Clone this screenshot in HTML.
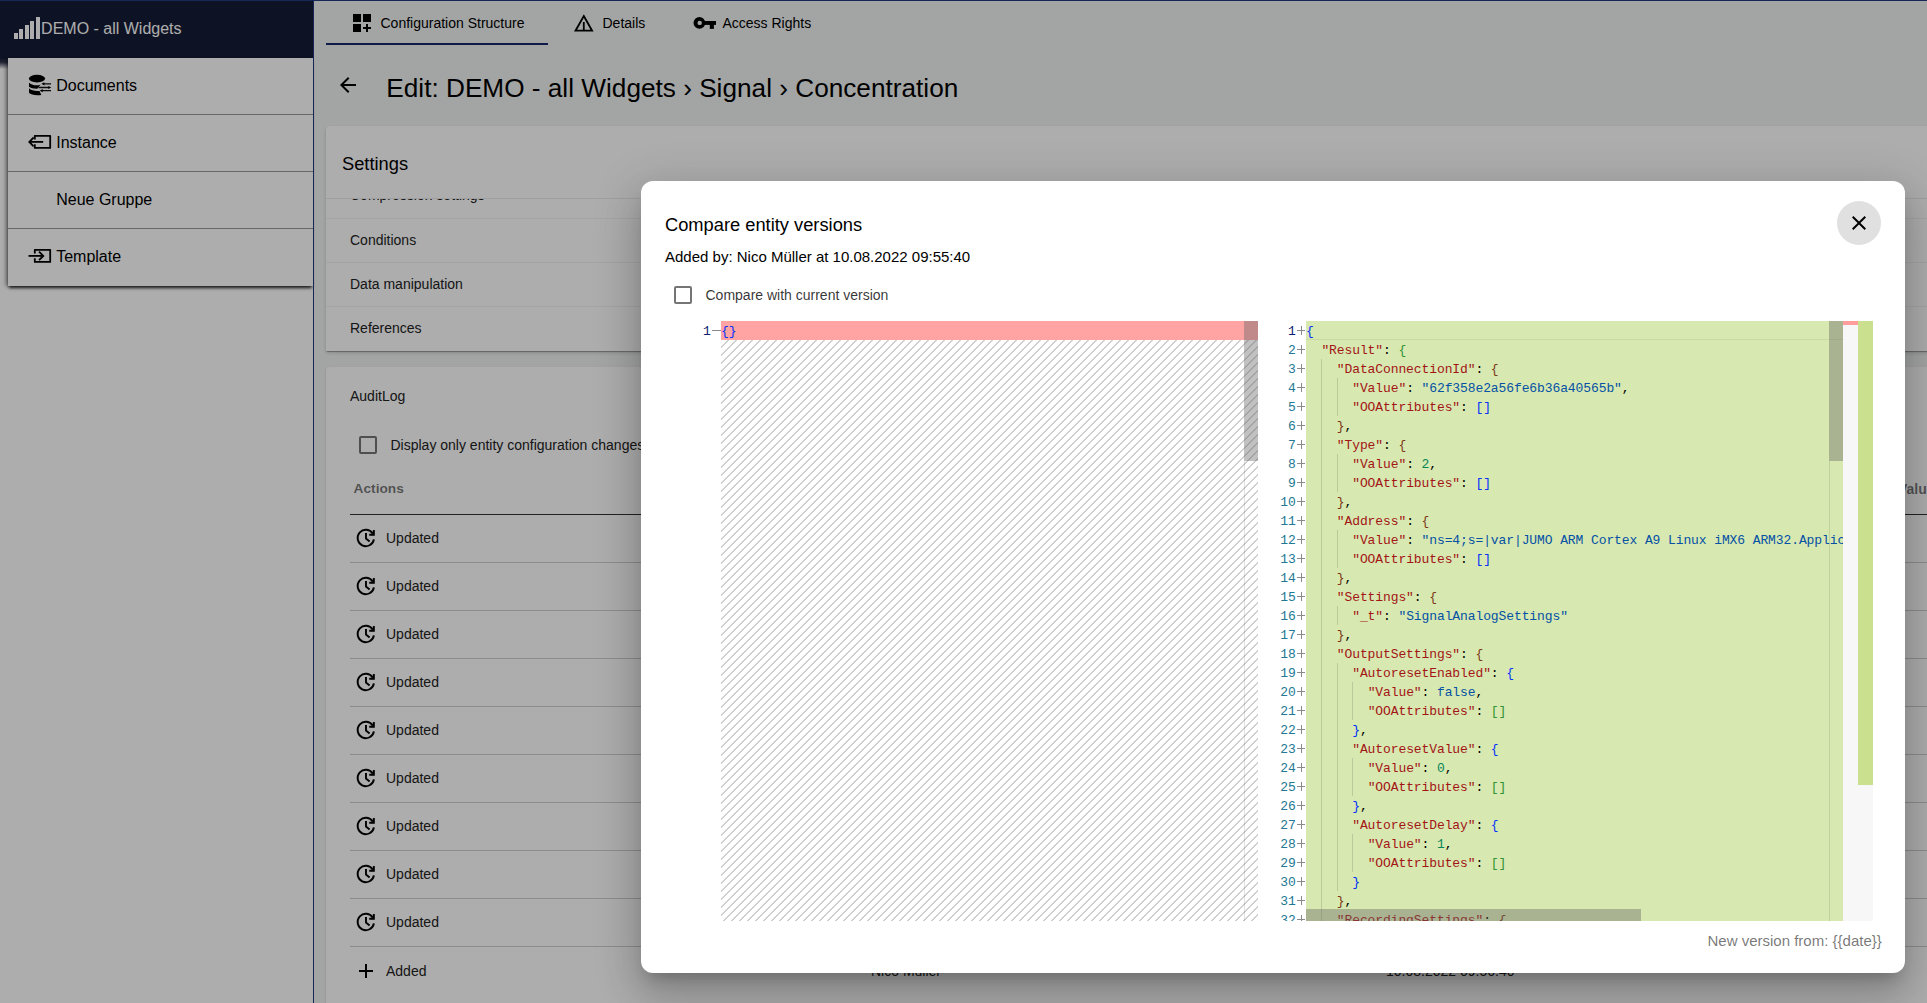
<!DOCTYPE html>
<html><head><meta charset="utf-8"><style>
*{box-sizing:border-box}
html,body{margin:0;padding:0}
body{width:1927px;height:1003px;overflow:hidden;position:relative;background:#f1f3f2;font-family:"Liberation Sans",sans-serif;color:#000}
.a{position:absolute}
.t{position:absolute;white-space:pre}
.mono{font-family:"Liberation Mono",monospace;font-size:13px;letter-spacing:-0.1px;white-space:pre}
</style></head><body>
<div class="a" style="left:0;top:58px;width:313px;height:945px;background:#fff"></div>
<div class="a" style="left:0;top:0;width:313px;height:58px;background:#141b35"></div>
<div class="a" style="left:0;top:58px;width:313px;height:11px;background:linear-gradient(#141b35 0%,rgba(20,27,53,.85) 40%,rgba(20,27,53,0) 100%)"></div>
<div class="a" style="left:0;top:0;width:1927px;height:1px;background:#203880"></div>
<div class="a" style="left:13.9px;top:33px;width:4px;height:6px;background:#fff"></div>
<div class="a" style="left:19.2px;top:29px;width:4px;height:10px;background:#fff"></div>
<div class="a" style="left:24.9px;top:25px;width:4px;height:14px;background:#fff"></div>
<div class="a" style="left:30.1px;top:21px;width:4px;height:18px;background:#fff"></div>
<div class="a" style="left:35.8px;top:16.5px;width:4px;height:22.5px;background:#fff"></div>
<div class="t" style="left:41.1px;top:21.26px;font-size:16px;line-height:16px;color:#fff">DEMO - all Widgets</div>

<div class="a" style="left:8px;top:58px;width:305px;height:227.5px;background:#fff;box-shadow:0 3px 3px -1px rgba(0,0,0,.8),-3px 1px 4px -1px rgba(0,0,0,.45)"></div>
<div class="a" style="left:8px;top:114px;width:305px;height:1px;background:#9a9a9a"></div>
<div class="t" style="left:56.2px;top:77.86px;font-size:16px;line-height:16px;color:#000">Documents</div>

<div class="a" style="left:8px;top:171px;width:305px;height:1px;background:#9a9a9a"></div>
<div class="t" style="left:56.2px;top:134.86px;font-size:16px;line-height:16px;color:#000">Instance</div>

<div class="a" style="left:8px;top:228px;width:305px;height:1px;background:#9a9a9a"></div>
<div class="t" style="left:56.2px;top:191.86px;font-size:16px;line-height:16px;color:#000">Neue Gruppe</div>

<div class="t" style="left:56.2px;top:248.86px;font-size:16px;line-height:16px;color:#000">Template</div>

<svg class="a" style="left:24px;top:70px" width="32" height="30" viewBox="24 70 32 30">
<ellipse cx="37" cy="78.6" rx="8.1" ry="3.8" fill="#000"/>
<path d="M29 82.4 C31 85, 37 86.3, 40.6 84.4 L37.3 88.8 C33.5 88.9, 30.5 88, 29 86.8 Z" fill="#000"/>
<path d="M29 88.3 C31 90.5, 36 91.6, 39.5 90.9 L41.3 94.9 C36 95.6, 30.5 94.8, 29 92.8 Z" fill="#000"/>
<path d="M43.5 83.8 H51 M38.5 87.5 H49 M42 90.7 H51" stroke="#111" stroke-width="1.3" fill="none"/>
<path d="M41.4 83.8 L44.4 82.2 V85.4Z M51.3 87.5 L48.3 85.9 V89.1Z M39.7 90.7 L42.7 89.1 V92.3Z" fill="#000"/>
</svg>
<svg class="a" style="left:24px;top:128px" width="32" height="30" viewBox="24 128 32 30">
<path d="M34.8 139.5 V135.8 H50.2 V147.9 H34.8 V144.2" stroke="#000" stroke-width="1.8" fill="none" stroke-linejoin="round"/>
<path d="M30 141.9 H43.2" stroke="#000" stroke-width="1.8"/>
<path d="M33.6 137.5 L29.3 141.9 L33.6 146.3" stroke="#000" stroke-width="1.8" fill="none"/>
</svg>
<svg class="a" style="left:24px;top:242px" width="32" height="30" viewBox="24 242 32 30">
<path d="M34.8 253.5 V249.8 H50.2 V261.9 H34.8 V258.2" stroke="#000" stroke-width="1.8" fill="none" stroke-linejoin="round"/>
<path d="M28.5 255.9 H42" stroke="#000" stroke-width="1.8"/>
<path d="M39 251.6 L43.3 255.9 L39 260.2" stroke="#000" stroke-width="1.8" fill="none"/>
</svg>
<div class="a" style="left:313px;top:0;width:1px;height:1003px;background:#203880"></div>
<div class="a" style="left:326px;top:43px;width:222px;height:2px;background:#16276b"></div>
<svg class="a" style="left:353px;top:14px" width="18" height="18" viewBox="0 0 18 18">
<rect x="0" y="0" width="8" height="8" fill="#000"/><rect x="10" y="0" width="8" height="8" fill="#000"/>
<rect x="0" y="10" width="8" height="8" fill="#000"/><path d="M14 10 V18 M10 14 H18" stroke="#000" stroke-width="2"/></svg>
<div class="t" style="left:380.5px;top:15.65px;font-size:14px;line-height:14px">Configuration Structure</div>

<svg class="a" style="left:573px;top:13px" width="22" height="20" viewBox="0 0 22 20">
<path d="M10.8 3 L19.1 17.7 H2.5 Z" stroke="#000" stroke-width="1.8" fill="none"/><path d="M10.8 9 V17.7" stroke="#000" stroke-width="1.8"/></svg>
<div class="t" style="left:602.5px;top:15.65px;font-size:14px;line-height:14px">Details</div>

<svg class="a" style="left:688px;top:10px" width="32" height="26" viewBox="688 10 32 26">
<path fill-rule="evenodd" d="M693.5 22.9 a5.9 5.9 0 1 0 11.8 0 a5.9 5.9 0 1 0 -11.8 0 Z M697.5 22.9 a2.2 2.2 0 1 0 4.4 0 a2.2 2.2 0 1 0 -4.4 0Z" fill="#000"/>
<rect x="704" y="21" width="12" height="3.9" fill="#000"/><rect x="709.8" y="24" width="4.1" height="4.9" fill="#000"/></svg>
<div class="t" style="left:722.5px;top:15.65px;font-size:14px;line-height:14px">Access Rights</div>

<svg class="a" style="left:336px;top:73px" width="24" height="24" viewBox="0 0 24 24"><path d="M20 11H7.83l5.59-5.59L12 4l-8 8 8 8 1.41-1.41L7.83 13H20v-2z" fill="#000"/></svg>
<div class="t" style="left:386.3px;top:74.62px;font-size:26.2px;line-height:26.2px">Edit: DEMO - all Widgets › Signal › Concentration</div>

<div class="a" style="left:326px;top:126px;width:1620px;height:225px;background:#fff;border-radius:4px 4px 0 0;box-shadow:0 2px 1px -1px rgba(0,0,0,.2),0 1px 1px 0 rgba(0,0,0,.14),0 2px 4px 0 rgba(0,0,0,.14)"></div>
<div class="t" style="left:342px;top:154.81px;font-size:18.3px;line-height:18.3px">Settings</div>

<div class="a" style="left:326px;top:198px;width:1601px;height:152px;overflow:hidden"><div class="t" style="left:24px;top:-9.65px;font-size:14px;line-height:14px;color:#222">Compression settings</div>
</div>
<div class="a" style="left:326px;top:198px;width:1601px;height:1px;background:#ebebeb"></div>
<div class="a" style="left:326px;top:218px;width:1601px;height:1px;background:#f2f2f2"></div>
<div class="a" style="left:326px;top:262px;width:1601px;height:1px;background:#f2f2f2"></div>
<div class="a" style="left:326px;top:306px;width:1601px;height:1px;background:#f2f2f2"></div>
<div class="t" style="left:350px;top:233.05px;font-size:14px;line-height:14px;color:#222">Conditions</div>

<div class="t" style="left:350px;top:276.85px;font-size:14px;line-height:14px;color:#222">Data manipulation</div>

<div class="t" style="left:350px;top:320.85px;font-size:14px;line-height:14px;color:#222">References</div>

<div class="a" style="left:326px;top:367px;width:1620px;height:700px;background:#fff;border-radius:4px;box-shadow:0 2px 1px -1px rgba(0,0,0,.2),0 1px 1px 0 rgba(0,0,0,.14),0 1px 3px 0 rgba(0,0,0,.12)"></div>
<div class="t" style="left:350px;top:389.15px;font-size:14px;line-height:14px;color:#222">AuditLog</div>

<div class="a" style="left:359px;top:436px;width:18px;height:18px;border:2px solid rgba(0,0,0,.54);border-radius:2px"></div>
<div class="t" style="left:390.5px;top:438.15px;font-size:14px;line-height:14px;color:#222">Display only entity configuration changes</div>

<div class="t" style="left:353.6px;top:482.30px;font-size:13.7px;line-height:13.7px;color:rgba(0,0,0,.54);font-weight:bold">Actions</div>

<div class="t" style="left:1898px;top:482.05px;font-size:14px;line-height:14px;color:rgba(0,0,0,.54);font-weight:bold">Value</div>

<div class="a" style="left:350px;top:514px;width:1577px;height:1px;background:#333"></div>
<svg class="a" style="left:350px;top:522px" width="32" height="32" viewBox="350 522 32 32">
<path d="M372.9 533.8 A8.2 8.2 0 1 0 373.9 539.3" stroke="#000" stroke-width="1.9" fill="none"/>
<path d="M369.2 534.8 H373.85 V530.1" stroke="#000" stroke-width="1.9" fill="none"/>
<path d="M366 533 V538.6 L369.6 541.4" stroke="#000" stroke-width="1.9" fill="none"/></svg>
<div class="t" style="left:386px;top:530.95px;font-size:14px;line-height:14px;color:#222">Updated</div>

<div class="a" style="left:350px;top:562px;width:1577px;height:1px;background:#cfcfcf"></div>
<svg class="a" style="left:350px;top:570px" width="32" height="32" viewBox="350 522 32 32">
<path d="M372.9 533.8 A8.2 8.2 0 1 0 373.9 539.3" stroke="#000" stroke-width="1.9" fill="none"/>
<path d="M369.2 534.8 H373.85 V530.1" stroke="#000" stroke-width="1.9" fill="none"/>
<path d="M366 533 V538.6 L369.6 541.4" stroke="#000" stroke-width="1.9" fill="none"/></svg>
<div class="t" style="left:386px;top:578.95px;font-size:14px;line-height:14px;color:#222">Updated</div>

<div class="a" style="left:350px;top:610px;width:1577px;height:1px;background:#cfcfcf"></div>
<svg class="a" style="left:350px;top:618px" width="32" height="32" viewBox="350 522 32 32">
<path d="M372.9 533.8 A8.2 8.2 0 1 0 373.9 539.3" stroke="#000" stroke-width="1.9" fill="none"/>
<path d="M369.2 534.8 H373.85 V530.1" stroke="#000" stroke-width="1.9" fill="none"/>
<path d="M366 533 V538.6 L369.6 541.4" stroke="#000" stroke-width="1.9" fill="none"/></svg>
<div class="t" style="left:386px;top:626.95px;font-size:14px;line-height:14px;color:#222">Updated</div>

<div class="a" style="left:350px;top:658px;width:1577px;height:1px;background:#cfcfcf"></div>
<svg class="a" style="left:350px;top:666px" width="32" height="32" viewBox="350 522 32 32">
<path d="M372.9 533.8 A8.2 8.2 0 1 0 373.9 539.3" stroke="#000" stroke-width="1.9" fill="none"/>
<path d="M369.2 534.8 H373.85 V530.1" stroke="#000" stroke-width="1.9" fill="none"/>
<path d="M366 533 V538.6 L369.6 541.4" stroke="#000" stroke-width="1.9" fill="none"/></svg>
<div class="t" style="left:386px;top:674.95px;font-size:14px;line-height:14px;color:#222">Updated</div>

<div class="a" style="left:350px;top:706px;width:1577px;height:1px;background:#cfcfcf"></div>
<svg class="a" style="left:350px;top:714px" width="32" height="32" viewBox="350 522 32 32">
<path d="M372.9 533.8 A8.2 8.2 0 1 0 373.9 539.3" stroke="#000" stroke-width="1.9" fill="none"/>
<path d="M369.2 534.8 H373.85 V530.1" stroke="#000" stroke-width="1.9" fill="none"/>
<path d="M366 533 V538.6 L369.6 541.4" stroke="#000" stroke-width="1.9" fill="none"/></svg>
<div class="t" style="left:386px;top:722.95px;font-size:14px;line-height:14px;color:#222">Updated</div>

<div class="a" style="left:350px;top:754px;width:1577px;height:1px;background:#cfcfcf"></div>
<svg class="a" style="left:350px;top:762px" width="32" height="32" viewBox="350 522 32 32">
<path d="M372.9 533.8 A8.2 8.2 0 1 0 373.9 539.3" stroke="#000" stroke-width="1.9" fill="none"/>
<path d="M369.2 534.8 H373.85 V530.1" stroke="#000" stroke-width="1.9" fill="none"/>
<path d="M366 533 V538.6 L369.6 541.4" stroke="#000" stroke-width="1.9" fill="none"/></svg>
<div class="t" style="left:386px;top:770.95px;font-size:14px;line-height:14px;color:#222">Updated</div>

<div class="a" style="left:350px;top:802px;width:1577px;height:1px;background:#cfcfcf"></div>
<svg class="a" style="left:350px;top:810px" width="32" height="32" viewBox="350 522 32 32">
<path d="M372.9 533.8 A8.2 8.2 0 1 0 373.9 539.3" stroke="#000" stroke-width="1.9" fill="none"/>
<path d="M369.2 534.8 H373.85 V530.1" stroke="#000" stroke-width="1.9" fill="none"/>
<path d="M366 533 V538.6 L369.6 541.4" stroke="#000" stroke-width="1.9" fill="none"/></svg>
<div class="t" style="left:386px;top:818.95px;font-size:14px;line-height:14px;color:#222">Updated</div>

<div class="a" style="left:350px;top:850px;width:1577px;height:1px;background:#cfcfcf"></div>
<svg class="a" style="left:350px;top:858px" width="32" height="32" viewBox="350 522 32 32">
<path d="M372.9 533.8 A8.2 8.2 0 1 0 373.9 539.3" stroke="#000" stroke-width="1.9" fill="none"/>
<path d="M369.2 534.8 H373.85 V530.1" stroke="#000" stroke-width="1.9" fill="none"/>
<path d="M366 533 V538.6 L369.6 541.4" stroke="#000" stroke-width="1.9" fill="none"/></svg>
<div class="t" style="left:386px;top:866.95px;font-size:14px;line-height:14px;color:#222">Updated</div>

<div class="a" style="left:350px;top:898px;width:1577px;height:1px;background:#cfcfcf"></div>
<svg class="a" style="left:350px;top:906px" width="32" height="32" viewBox="350 522 32 32">
<path d="M372.9 533.8 A8.2 8.2 0 1 0 373.9 539.3" stroke="#000" stroke-width="1.9" fill="none"/>
<path d="M369.2 534.8 H373.85 V530.1" stroke="#000" stroke-width="1.9" fill="none"/>
<path d="M366 533 V538.6 L369.6 541.4" stroke="#000" stroke-width="1.9" fill="none"/></svg>
<div class="t" style="left:386px;top:914.95px;font-size:14px;line-height:14px;color:#222">Updated</div>

<div class="a" style="left:350px;top:946px;width:1577px;height:1px;background:#cfcfcf"></div>
<svg class="a" style="left:357px;top:963px" width="18" height="18" viewBox="0 0 18 18"><path d="M9 1V15M2 8H16" stroke="#000" stroke-width="2"/></svg>
<div class="t" style="left:386px;top:963.95px;font-size:14px;line-height:14px;color:#222">Added</div>

<div class="t" style="left:871px;top:963.95px;font-size:14px;line-height:14px;color:#222">Nico Müller</div>

<div class="t" style="left:1386px;top:963.95px;font-size:14px;line-height:14px;color:#222">10.08.2022 09:56:40</div>

<div class="a" style="left:0;top:0;width:1927px;height:1003px;background:rgba(0,0,0,.32)"></div>
<div class="a" style="left:641px;top:181px;width:1264px;height:792px;background:#fff;border-radius:12px;box-shadow:0 11px 15px -7px rgba(0,0,0,.2),0 24px 38px 3px rgba(0,0,0,.14),0 9px 46px 8px rgba(0,0,0,.12)"></div>
<div class="t" style="left:665px;top:215.51px;font-size:18.3px;line-height:18.3px;color:#000">Compare entity versions</div>

<div class="t" style="left:665px;top:248.80px;font-size:15px;line-height:15px;color:#000">Added by: Nico Müller at 10.08.2022 09:55:40</div>

<div class="a" style="left:674px;top:286px;width:18px;height:18px;border:2px solid rgba(0,0,0,.54);border-radius:2px"></div>
<div class="t" style="left:705.5px;top:287.85px;font-size:14px;line-height:14px;color:rgba(0,0,0,.8)">Compare with current version</div>

<div class="a" style="left:1837px;top:201px;width:44px;height:44px;border-radius:50%;background:#e0e0e0"></div>
<svg class="a" style="left:1847px;top:211px" width="24" height="24" viewBox="0 0 24 24"><path d="M19 6.41L17.59 5 12 10.59 6.41 5 5 6.41 10.59 12 5 17.59 6.41 19 12 13.41 17.59 19 19 17.59 13.41 12z" fill="#000"/></svg>
<div class="t" style="left:1707.5px;top:932.90px;font-size:15px;line-height:15px;color:rgba(0,0,0,.55)">New version from: {{date}}</div>

<div class="a" style="left:665px;top:321px;width:1208px;height:600px;overflow:hidden;background:#fff">
<div class="a" style="left:579px;top:140px;width:1px;height:460px;background:#e2e2e2"></div>
<div class="a" style="left:56px;top:19px;width:537px;height:600px;background-image:linear-gradient(-45deg,rgba(34,34,34,.22) 12.5%,transparent 12.5%,transparent 50%,rgba(34,34,34,.22) 50%,rgba(34,34,34,.22) 62.5%,transparent 62.5%,transparent 100%);background-size:8px 8px"></div>
<div class="a" style="left:56px;top:0px;width:537px;height:19px;background:#ffa3a3"></div>
<div class="a mono" style="left:38px;top:0.7px;width:8px;height:19px;line-height:19px;color:#0b216f">1</div>
<div class="a" style="left:47px;top:9px;width:9px;height:1px;background:#888"></div>
<div class="a mono" style="left:56px;top:0.7px;height:19px;line-height:19px;color:#0431fa">{}</div>
<div class="a" style="left:579px;top:0px;width:14px;height:140px;background:rgba(100,100,100,.4)"></div>
<div class="a" style="left:641px;top:0px;width:537px;height:600px;background:#d7e8b1"></div>
<div class="a" style="left:641px;top:18px;width:537px;height:1px;background:rgba(0,0,0,.06)"></div>
<div class="a" style="left:656px;top:38px;width:1px;height:19px;background:rgba(0,0,0,.13)"></div>
<div class="a" style="left:656px;top:57px;width:1px;height:19px;background:rgba(0,0,0,.13)"></div>
<div class="a" style="left:672px;top:57px;width:1px;height:19px;background:rgba(0,0,0,.13)"></div>
<div class="a" style="left:656px;top:76px;width:1px;height:19px;background:rgba(0,0,0,.13)"></div>
<div class="a" style="left:672px;top:76px;width:1px;height:19px;background:rgba(0,0,0,.13)"></div>
<div class="a" style="left:656px;top:95px;width:1px;height:19px;background:rgba(0,0,0,.13)"></div>
<div class="a" style="left:656px;top:114px;width:1px;height:19px;background:rgba(0,0,0,.13)"></div>
<div class="a" style="left:656px;top:133px;width:1px;height:19px;background:rgba(0,0,0,.13)"></div>
<div class="a" style="left:672px;top:133px;width:1px;height:19px;background:rgba(0,0,0,.13)"></div>
<div class="a" style="left:656px;top:152px;width:1px;height:19px;background:rgba(0,0,0,.13)"></div>
<div class="a" style="left:672px;top:152px;width:1px;height:19px;background:rgba(0,0,0,.13)"></div>
<div class="a" style="left:656px;top:171px;width:1px;height:19px;background:rgba(0,0,0,.13)"></div>
<div class="a" style="left:656px;top:190px;width:1px;height:19px;background:rgba(0,0,0,.13)"></div>
<div class="a" style="left:656px;top:209px;width:1px;height:19px;background:rgba(0,0,0,.13)"></div>
<div class="a" style="left:672px;top:209px;width:1px;height:19px;background:rgba(0,0,0,.13)"></div>
<div class="a" style="left:656px;top:228px;width:1px;height:19px;background:rgba(0,0,0,.13)"></div>
<div class="a" style="left:672px;top:228px;width:1px;height:19px;background:rgba(0,0,0,.13)"></div>
<div class="a" style="left:656px;top:247px;width:1px;height:19px;background:rgba(0,0,0,.13)"></div>
<div class="a" style="left:656px;top:266px;width:1px;height:19px;background:rgba(0,0,0,.13)"></div>
<div class="a" style="left:656px;top:285px;width:1px;height:19px;background:rgba(0,0,0,.13)"></div>
<div class="a" style="left:672px;top:285px;width:1px;height:19px;background:rgba(0,0,0,.13)"></div>
<div class="a" style="left:656px;top:304px;width:1px;height:19px;background:rgba(0,0,0,.13)"></div>
<div class="a" style="left:656px;top:323px;width:1px;height:19px;background:rgba(0,0,0,.13)"></div>
<div class="a" style="left:656px;top:342px;width:1px;height:19px;background:rgba(0,0,0,.13)"></div>
<div class="a" style="left:672px;top:342px;width:1px;height:19px;background:rgba(0,0,0,.13)"></div>
<div class="a" style="left:656px;top:361px;width:1px;height:19px;background:rgba(0,0,0,.13)"></div>
<div class="a" style="left:672px;top:361px;width:1px;height:19px;background:rgba(0,0,0,.13)"></div>
<div class="a" style="left:687px;top:361px;width:1px;height:19px;background:rgba(0,0,0,.13)"></div>
<div class="a" style="left:656px;top:380px;width:1px;height:19px;background:rgba(0,0,0,.13)"></div>
<div class="a" style="left:672px;top:380px;width:1px;height:19px;background:rgba(0,0,0,.13)"></div>
<div class="a" style="left:687px;top:380px;width:1px;height:19px;background:rgba(0,0,0,.13)"></div>
<div class="a" style="left:656px;top:399px;width:1px;height:19px;background:rgba(0,0,0,.13)"></div>
<div class="a" style="left:672px;top:399px;width:1px;height:19px;background:rgba(0,0,0,.13)"></div>
<div class="a" style="left:656px;top:418px;width:1px;height:19px;background:rgba(0,0,0,.13)"></div>
<div class="a" style="left:672px;top:418px;width:1px;height:19px;background:rgba(0,0,0,.13)"></div>
<div class="a" style="left:656px;top:437px;width:1px;height:19px;background:rgba(0,0,0,.13)"></div>
<div class="a" style="left:672px;top:437px;width:1px;height:19px;background:rgba(0,0,0,.13)"></div>
<div class="a" style="left:687px;top:437px;width:1px;height:19px;background:rgba(0,0,0,.13)"></div>
<div class="a" style="left:656px;top:456px;width:1px;height:19px;background:rgba(0,0,0,.13)"></div>
<div class="a" style="left:672px;top:456px;width:1px;height:19px;background:rgba(0,0,0,.13)"></div>
<div class="a" style="left:687px;top:456px;width:1px;height:19px;background:rgba(0,0,0,.13)"></div>
<div class="a" style="left:656px;top:475px;width:1px;height:19px;background:rgba(0,0,0,.13)"></div>
<div class="a" style="left:672px;top:475px;width:1px;height:19px;background:rgba(0,0,0,.13)"></div>
<div class="a" style="left:656px;top:494px;width:1px;height:19px;background:rgba(0,0,0,.13)"></div>
<div class="a" style="left:672px;top:494px;width:1px;height:19px;background:rgba(0,0,0,.13)"></div>
<div class="a" style="left:656px;top:513px;width:1px;height:19px;background:rgba(0,0,0,.13)"></div>
<div class="a" style="left:672px;top:513px;width:1px;height:19px;background:rgba(0,0,0,.13)"></div>
<div class="a" style="left:687px;top:513px;width:1px;height:19px;background:rgba(0,0,0,.13)"></div>
<div class="a" style="left:656px;top:532px;width:1px;height:19px;background:rgba(0,0,0,.13)"></div>
<div class="a" style="left:672px;top:532px;width:1px;height:19px;background:rgba(0,0,0,.13)"></div>
<div class="a" style="left:687px;top:532px;width:1px;height:19px;background:rgba(0,0,0,.13)"></div>
<div class="a" style="left:656px;top:551px;width:1px;height:19px;background:rgba(0,0,0,.13)"></div>
<div class="a" style="left:672px;top:551px;width:1px;height:19px;background:rgba(0,0,0,.13)"></div>
<div class="a" style="left:656px;top:570px;width:1px;height:19px;background:rgba(0,0,0,.13)"></div>
<div class="a" style="left:656px;top:589px;width:1px;height:19px;background:rgba(0,0,0,.13)"></div>
<div class="a mono" style="left:593px;top:0.7px;width:37.700000000000045px;height:19px;line-height:19px;text-align:right;color:#0b216f">1</div>
<div class="a" style="left:632px;top:9px;width:8px;height:1px;background:#8a8a8a"></div>
<div class="a" style="left:635.5px;top:5px;width:1px;height:9px;background:#8a8a8a"></div>
<div class="a mono" style="left:593px;top:19.7px;width:37.700000000000045px;height:19px;line-height:19px;text-align:right;color:#237893">2</div>
<div class="a" style="left:632px;top:28px;width:8px;height:1px;background:#8a8a8a"></div>
<div class="a" style="left:635.5px;top:24px;width:1px;height:9px;background:#8a8a8a"></div>
<div class="a mono" style="left:593px;top:38.7px;width:37.700000000000045px;height:19px;line-height:19px;text-align:right;color:#237893">3</div>
<div class="a" style="left:632px;top:47px;width:8px;height:1px;background:#8a8a8a"></div>
<div class="a" style="left:635.5px;top:43px;width:1px;height:9px;background:#8a8a8a"></div>
<div class="a mono" style="left:593px;top:57.7px;width:37.700000000000045px;height:19px;line-height:19px;text-align:right;color:#237893">4</div>
<div class="a" style="left:632px;top:66px;width:8px;height:1px;background:#8a8a8a"></div>
<div class="a" style="left:635.5px;top:62px;width:1px;height:9px;background:#8a8a8a"></div>
<div class="a mono" style="left:593px;top:76.7px;width:37.700000000000045px;height:19px;line-height:19px;text-align:right;color:#237893">5</div>
<div class="a" style="left:632px;top:85px;width:8px;height:1px;background:#8a8a8a"></div>
<div class="a" style="left:635.5px;top:81px;width:1px;height:9px;background:#8a8a8a"></div>
<div class="a mono" style="left:593px;top:95.7px;width:37.700000000000045px;height:19px;line-height:19px;text-align:right;color:#237893">6</div>
<div class="a" style="left:632px;top:104px;width:8px;height:1px;background:#8a8a8a"></div>
<div class="a" style="left:635.5px;top:100px;width:1px;height:9px;background:#8a8a8a"></div>
<div class="a mono" style="left:593px;top:114.7px;width:37.700000000000045px;height:19px;line-height:19px;text-align:right;color:#237893">7</div>
<div class="a" style="left:632px;top:123px;width:8px;height:1px;background:#8a8a8a"></div>
<div class="a" style="left:635.5px;top:119px;width:1px;height:9px;background:#8a8a8a"></div>
<div class="a mono" style="left:593px;top:133.7px;width:37.700000000000045px;height:19px;line-height:19px;text-align:right;color:#237893">8</div>
<div class="a" style="left:632px;top:142px;width:8px;height:1px;background:#8a8a8a"></div>
<div class="a" style="left:635.5px;top:138px;width:1px;height:9px;background:#8a8a8a"></div>
<div class="a mono" style="left:593px;top:152.7px;width:37.700000000000045px;height:19px;line-height:19px;text-align:right;color:#237893">9</div>
<div class="a" style="left:632px;top:161px;width:8px;height:1px;background:#8a8a8a"></div>
<div class="a" style="left:635.5px;top:157px;width:1px;height:9px;background:#8a8a8a"></div>
<div class="a mono" style="left:593px;top:171.7px;width:37.700000000000045px;height:19px;line-height:19px;text-align:right;color:#237893">10</div>
<div class="a" style="left:632px;top:180px;width:8px;height:1px;background:#8a8a8a"></div>
<div class="a" style="left:635.5px;top:176px;width:1px;height:9px;background:#8a8a8a"></div>
<div class="a mono" style="left:593px;top:190.7px;width:37.700000000000045px;height:19px;line-height:19px;text-align:right;color:#237893">11</div>
<div class="a" style="left:632px;top:199px;width:8px;height:1px;background:#8a8a8a"></div>
<div class="a" style="left:635.5px;top:195px;width:1px;height:9px;background:#8a8a8a"></div>
<div class="a mono" style="left:593px;top:209.7px;width:37.700000000000045px;height:19px;line-height:19px;text-align:right;color:#237893">12</div>
<div class="a" style="left:632px;top:218px;width:8px;height:1px;background:#8a8a8a"></div>
<div class="a" style="left:635.5px;top:214px;width:1px;height:9px;background:#8a8a8a"></div>
<div class="a mono" style="left:593px;top:228.7px;width:37.700000000000045px;height:19px;line-height:19px;text-align:right;color:#237893">13</div>
<div class="a" style="left:632px;top:237px;width:8px;height:1px;background:#8a8a8a"></div>
<div class="a" style="left:635.5px;top:233px;width:1px;height:9px;background:#8a8a8a"></div>
<div class="a mono" style="left:593px;top:247.7px;width:37.700000000000045px;height:19px;line-height:19px;text-align:right;color:#237893">14</div>
<div class="a" style="left:632px;top:256px;width:8px;height:1px;background:#8a8a8a"></div>
<div class="a" style="left:635.5px;top:252px;width:1px;height:9px;background:#8a8a8a"></div>
<div class="a mono" style="left:593px;top:266.7px;width:37.700000000000045px;height:19px;line-height:19px;text-align:right;color:#237893">15</div>
<div class="a" style="left:632px;top:275px;width:8px;height:1px;background:#8a8a8a"></div>
<div class="a" style="left:635.5px;top:271px;width:1px;height:9px;background:#8a8a8a"></div>
<div class="a mono" style="left:593px;top:285.7px;width:37.700000000000045px;height:19px;line-height:19px;text-align:right;color:#237893">16</div>
<div class="a" style="left:632px;top:294px;width:8px;height:1px;background:#8a8a8a"></div>
<div class="a" style="left:635.5px;top:290px;width:1px;height:9px;background:#8a8a8a"></div>
<div class="a mono" style="left:593px;top:304.7px;width:37.700000000000045px;height:19px;line-height:19px;text-align:right;color:#237893">17</div>
<div class="a" style="left:632px;top:313px;width:8px;height:1px;background:#8a8a8a"></div>
<div class="a" style="left:635.5px;top:309px;width:1px;height:9px;background:#8a8a8a"></div>
<div class="a mono" style="left:593px;top:323.7px;width:37.700000000000045px;height:19px;line-height:19px;text-align:right;color:#237893">18</div>
<div class="a" style="left:632px;top:332px;width:8px;height:1px;background:#8a8a8a"></div>
<div class="a" style="left:635.5px;top:328px;width:1px;height:9px;background:#8a8a8a"></div>
<div class="a mono" style="left:593px;top:342.7px;width:37.700000000000045px;height:19px;line-height:19px;text-align:right;color:#237893">19</div>
<div class="a" style="left:632px;top:351px;width:8px;height:1px;background:#8a8a8a"></div>
<div class="a" style="left:635.5px;top:347px;width:1px;height:9px;background:#8a8a8a"></div>
<div class="a mono" style="left:593px;top:361.7px;width:37.700000000000045px;height:19px;line-height:19px;text-align:right;color:#237893">20</div>
<div class="a" style="left:632px;top:370px;width:8px;height:1px;background:#8a8a8a"></div>
<div class="a" style="left:635.5px;top:366px;width:1px;height:9px;background:#8a8a8a"></div>
<div class="a mono" style="left:593px;top:380.7px;width:37.700000000000045px;height:19px;line-height:19px;text-align:right;color:#237893">21</div>
<div class="a" style="left:632px;top:389px;width:8px;height:1px;background:#8a8a8a"></div>
<div class="a" style="left:635.5px;top:385px;width:1px;height:9px;background:#8a8a8a"></div>
<div class="a mono" style="left:593px;top:399.7px;width:37.700000000000045px;height:19px;line-height:19px;text-align:right;color:#237893">22</div>
<div class="a" style="left:632px;top:408px;width:8px;height:1px;background:#8a8a8a"></div>
<div class="a" style="left:635.5px;top:404px;width:1px;height:9px;background:#8a8a8a"></div>
<div class="a mono" style="left:593px;top:418.7px;width:37.700000000000045px;height:19px;line-height:19px;text-align:right;color:#237893">23</div>
<div class="a" style="left:632px;top:427px;width:8px;height:1px;background:#8a8a8a"></div>
<div class="a" style="left:635.5px;top:423px;width:1px;height:9px;background:#8a8a8a"></div>
<div class="a mono" style="left:593px;top:437.7px;width:37.700000000000045px;height:19px;line-height:19px;text-align:right;color:#237893">24</div>
<div class="a" style="left:632px;top:446px;width:8px;height:1px;background:#8a8a8a"></div>
<div class="a" style="left:635.5px;top:442px;width:1px;height:9px;background:#8a8a8a"></div>
<div class="a mono" style="left:593px;top:456.7px;width:37.700000000000045px;height:19px;line-height:19px;text-align:right;color:#237893">25</div>
<div class="a" style="left:632px;top:465px;width:8px;height:1px;background:#8a8a8a"></div>
<div class="a" style="left:635.5px;top:461px;width:1px;height:9px;background:#8a8a8a"></div>
<div class="a mono" style="left:593px;top:475.7px;width:37.700000000000045px;height:19px;line-height:19px;text-align:right;color:#237893">26</div>
<div class="a" style="left:632px;top:484px;width:8px;height:1px;background:#8a8a8a"></div>
<div class="a" style="left:635.5px;top:480px;width:1px;height:9px;background:#8a8a8a"></div>
<div class="a mono" style="left:593px;top:494.7px;width:37.700000000000045px;height:19px;line-height:19px;text-align:right;color:#237893">27</div>
<div class="a" style="left:632px;top:503px;width:8px;height:1px;background:#8a8a8a"></div>
<div class="a" style="left:635.5px;top:499px;width:1px;height:9px;background:#8a8a8a"></div>
<div class="a mono" style="left:593px;top:513.7px;width:37.700000000000045px;height:19px;line-height:19px;text-align:right;color:#237893">28</div>
<div class="a" style="left:632px;top:522px;width:8px;height:1px;background:#8a8a8a"></div>
<div class="a" style="left:635.5px;top:518px;width:1px;height:9px;background:#8a8a8a"></div>
<div class="a mono" style="left:593px;top:532.7px;width:37.700000000000045px;height:19px;line-height:19px;text-align:right;color:#237893">29</div>
<div class="a" style="left:632px;top:541px;width:8px;height:1px;background:#8a8a8a"></div>
<div class="a" style="left:635.5px;top:537px;width:1px;height:9px;background:#8a8a8a"></div>
<div class="a mono" style="left:593px;top:551.7px;width:37.700000000000045px;height:19px;line-height:19px;text-align:right;color:#237893">30</div>
<div class="a" style="left:632px;top:560px;width:8px;height:1px;background:#8a8a8a"></div>
<div class="a" style="left:635.5px;top:556px;width:1px;height:9px;background:#8a8a8a"></div>
<div class="a mono" style="left:593px;top:570.7px;width:37.700000000000045px;height:19px;line-height:19px;text-align:right;color:#237893">31</div>
<div class="a" style="left:632px;top:579px;width:8px;height:1px;background:#8a8a8a"></div>
<div class="a" style="left:635.5px;top:575px;width:1px;height:9px;background:#8a8a8a"></div>
<div class="a mono" style="left:593px;top:589.7px;width:37.700000000000045px;height:19px;line-height:19px;text-align:right;color:#237893">32</div>
<div class="a" style="left:632px;top:598px;width:8px;height:1px;background:#8a8a8a"></div>
<div class="a" style="left:635.5px;top:594px;width:1px;height:9px;background:#8a8a8a"></div>
<div class="a" style="left:641px;top:0;width:537px;height:600px;overflow:hidden">
<div class="a mono" style="left:0;top:0.7px;height:19px;line-height:19px"><span style="color:#0431fa">{</span></div>
<div class="a mono" style="left:0;top:19.7px;height:19px;line-height:19px"><span style="color:#000">  </span><span style="color:#a31515">&quot;Result&quot;</span><span style="color:#000">: </span><span style="color:#319331">{</span></div>
<div class="a mono" style="left:0;top:38.7px;height:19px;line-height:19px"><span style="color:#000">    </span><span style="color:#a31515">&quot;DataConnectionId&quot;</span><span style="color:#000">: </span><span style="color:#7b3814">{</span></div>
<div class="a mono" style="left:0;top:57.7px;height:19px;line-height:19px"><span style="color:#000">      </span><span style="color:#a31515">&quot;Value&quot;</span><span style="color:#000">: </span><span style="color:#0451a5">&quot;62f358e2a56fe6b36a40565b&quot;</span><span style="color:#000">,</span></div>
<div class="a mono" style="left:0;top:76.7px;height:19px;line-height:19px"><span style="color:#000">      </span><span style="color:#a31515">&quot;OOAttributes&quot;</span><span style="color:#000">: </span><span style="color:#0431fa">[]</span></div>
<div class="a mono" style="left:0;top:95.7px;height:19px;line-height:19px"><span style="color:#000">    </span><span style="color:#7b3814">}</span><span style="color:#000">,</span></div>
<div class="a mono" style="left:0;top:114.7px;height:19px;line-height:19px"><span style="color:#000">    </span><span style="color:#a31515">&quot;Type&quot;</span><span style="color:#000">: </span><span style="color:#7b3814">{</span></div>
<div class="a mono" style="left:0;top:133.7px;height:19px;line-height:19px"><span style="color:#000">      </span><span style="color:#a31515">&quot;Value&quot;</span><span style="color:#000">: </span><span style="color:#098658">2</span><span style="color:#000">,</span></div>
<div class="a mono" style="left:0;top:152.7px;height:19px;line-height:19px"><span style="color:#000">      </span><span style="color:#a31515">&quot;OOAttributes&quot;</span><span style="color:#000">: </span><span style="color:#0431fa">[]</span></div>
<div class="a mono" style="left:0;top:171.7px;height:19px;line-height:19px"><span style="color:#000">    </span><span style="color:#7b3814">}</span><span style="color:#000">,</span></div>
<div class="a mono" style="left:0;top:190.7px;height:19px;line-height:19px"><span style="color:#000">    </span><span style="color:#a31515">&quot;Address&quot;</span><span style="color:#000">: </span><span style="color:#7b3814">{</span></div>
<div class="a mono" style="left:0;top:209.7px;height:19px;line-height:19px"><span style="color:#000">      </span><span style="color:#a31515">&quot;Value&quot;</span><span style="color:#000">: </span><span style="color:#0451a5">&quot;ns=4;s=|var|JUMO ARM Cortex A9 Linux iMX6 ARM32.Application.GVL.Concentration&quot;</span><span style="color:#000">,</span></div>
<div class="a mono" style="left:0;top:228.7px;height:19px;line-height:19px"><span style="color:#000">      </span><span style="color:#a31515">&quot;OOAttributes&quot;</span><span style="color:#000">: </span><span style="color:#0431fa">[]</span></div>
<div class="a mono" style="left:0;top:247.7px;height:19px;line-height:19px"><span style="color:#000">    </span><span style="color:#7b3814">}</span><span style="color:#000">,</span></div>
<div class="a mono" style="left:0;top:266.7px;height:19px;line-height:19px"><span style="color:#000">    </span><span style="color:#a31515">&quot;Settings&quot;</span><span style="color:#000">: </span><span style="color:#7b3814">{</span></div>
<div class="a mono" style="left:0;top:285.7px;height:19px;line-height:19px"><span style="color:#000">      </span><span style="color:#a31515">&quot;_t&quot;</span><span style="color:#000">: </span><span style="color:#0451a5">&quot;SignalAnalogSettings&quot;</span></div>
<div class="a mono" style="left:0;top:304.7px;height:19px;line-height:19px"><span style="color:#000">    </span><span style="color:#7b3814">}</span><span style="color:#000">,</span></div>
<div class="a mono" style="left:0;top:323.7px;height:19px;line-height:19px"><span style="color:#000">    </span><span style="color:#a31515">&quot;OutputSettings&quot;</span><span style="color:#000">: </span><span style="color:#7b3814">{</span></div>
<div class="a mono" style="left:0;top:342.7px;height:19px;line-height:19px"><span style="color:#000">      </span><span style="color:#a31515">&quot;AutoresetEnabled&quot;</span><span style="color:#000">: </span><span style="color:#0431fa">{</span></div>
<div class="a mono" style="left:0;top:361.7px;height:19px;line-height:19px"><span style="color:#000">        </span><span style="color:#a31515">&quot;Value&quot;</span><span style="color:#000">: </span><span style="color:#0451a5">false</span><span style="color:#000">,</span></div>
<div class="a mono" style="left:0;top:380.7px;height:19px;line-height:19px"><span style="color:#000">        </span><span style="color:#a31515">&quot;OOAttributes&quot;</span><span style="color:#000">: </span><span style="color:#319331">[]</span></div>
<div class="a mono" style="left:0;top:399.7px;height:19px;line-height:19px"><span style="color:#000">      </span><span style="color:#0431fa">}</span><span style="color:#000">,</span></div>
<div class="a mono" style="left:0;top:418.7px;height:19px;line-height:19px"><span style="color:#000">      </span><span style="color:#a31515">&quot;AutoresetValue&quot;</span><span style="color:#000">: </span><span style="color:#0431fa">{</span></div>
<div class="a mono" style="left:0;top:437.7px;height:19px;line-height:19px"><span style="color:#000">        </span><span style="color:#a31515">&quot;Value&quot;</span><span style="color:#000">: </span><span style="color:#098658">0</span><span style="color:#000">,</span></div>
<div class="a mono" style="left:0;top:456.7px;height:19px;line-height:19px"><span style="color:#000">        </span><span style="color:#a31515">&quot;OOAttributes&quot;</span><span style="color:#000">: </span><span style="color:#319331">[]</span></div>
<div class="a mono" style="left:0;top:475.7px;height:19px;line-height:19px"><span style="color:#000">      </span><span style="color:#0431fa">}</span><span style="color:#000">,</span></div>
<div class="a mono" style="left:0;top:494.7px;height:19px;line-height:19px"><span style="color:#000">      </span><span style="color:#a31515">&quot;AutoresetDelay&quot;</span><span style="color:#000">: </span><span style="color:#0431fa">{</span></div>
<div class="a mono" style="left:0;top:513.7px;height:19px;line-height:19px"><span style="color:#000">        </span><span style="color:#a31515">&quot;Value&quot;</span><span style="color:#000">: </span><span style="color:#098658">1</span><span style="color:#000">,</span></div>
<div class="a mono" style="left:0;top:532.7px;height:19px;line-height:19px"><span style="color:#000">        </span><span style="color:#a31515">&quot;OOAttributes&quot;</span><span style="color:#000">: </span><span style="color:#319331">[]</span></div>
<div class="a mono" style="left:0;top:551.7px;height:19px;line-height:19px"><span style="color:#000">      </span><span style="color:#0431fa">}</span></div>
<div class="a mono" style="left:0;top:570.7px;height:19px;line-height:19px"><span style="color:#000">    </span><span style="color:#7b3814">}</span><span style="color:#000">,</span></div>
<div class="a mono" style="left:0;top:589.7px;height:19px;line-height:19px"><span style="color:#000">    </span><span style="color:#a31515">&quot;RecordingSettings&quot;</span><span style="color:#000">: </span><span style="color:#7b3814">{</span></div>
</div>
<div class="a" style="left:1164px;top:140px;width:1px;height:460px;background:rgba(0,0,0,.1)"></div>
<div class="a" style="left:1164px;top:0px;width:14px;height:140px;background:rgba(100,100,100,.4)"></div>
<div class="a" style="left:641px;top:588px;width:335px;height:12px;background:rgba(100,100,100,.4)"></div>
<div class="a" style="left:1178px;top:0px;width:30px;height:600px;background:#f7f7f7"></div>
<div class="a" style="left:1178px;top:0px;width:15px;height:4px;background:#ff9c9c"></div>
<div class="a" style="left:1193px;top:0px;width:15px;height:464px;background:#cbe08f"></div>
</div>
</body></html>
